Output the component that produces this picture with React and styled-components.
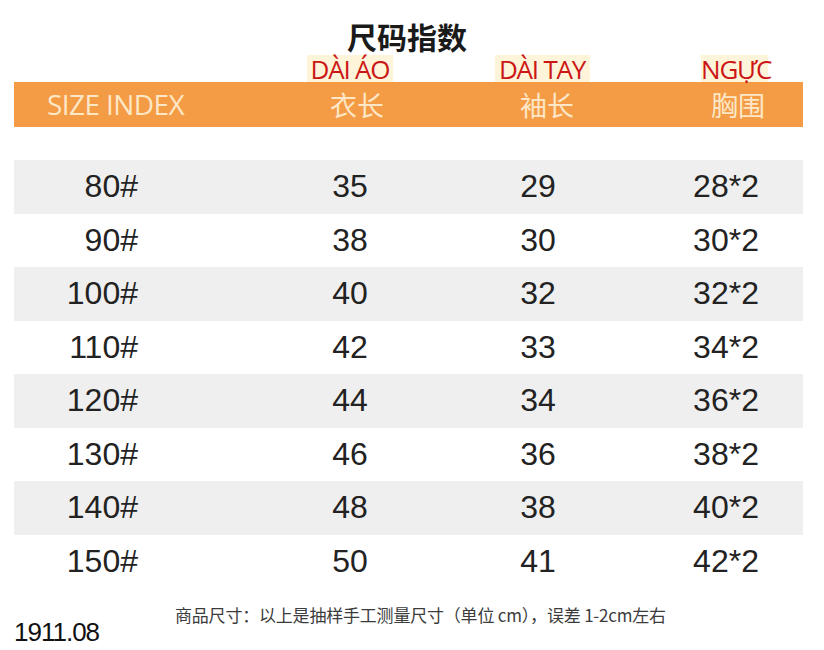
import React from "react";
import styled, { createGlobalStyle } from "styled-components";

const GlobalStyle = createGlobalStyle`
  body {
    margin: 0;
    background: #ffffff;
    font-family: "Liberation Sans", Arial, sans-serif;
  }
`;

const COLS = "242px 188px 188px 171px";

const Page = styled.div`
  width: 824px;
  height: 650px;
  background: #ffffff;
  overflow: hidden;
`;

const Title = styled.h1`
  margin: 21px 0 0;
  height: 30px;
  text-align: center;
  font-family: "Noto Sans CJK SC", sans-serif;
  font-size: 30px;
  line-height: 30px;
  font-weight: 700;
  color: #1a1a1a;
  padding-right: 10px;
`;

const LabelRow = styled.div`
  display: grid;
  grid-template-columns: ${COLS};
  width: 789px;
  margin: 4px 14px 0;
  height: 27px;
`;

const LabelCell = styled.div`
  display: flex;
  justify-content: center;
  padding-left: ${(p) => p.shift || 0}px;
`;

const Label = styled.span`
  display: inline-block;
  width: ${(p) => p.w}px;
  height: 27px;
  background: #fdf4d9;
  color: #cc1616;
  font-family: "Open Sans", sans-serif;
  font-size: 26px;
  line-height: 28px;
  letter-spacing: -1.2px;
  text-align: center;
  white-space: nowrap;
`;

const HeaderBar = styled.div`
  display: grid;
  grid-template-columns: ${COLS};
  width: 789px;
  margin: 0 14px;
  height: 45px;
  background: #f49b45;
  align-items: center;
  color: #fde7c6;
`;

const HeaderEn = styled.div`
  padding-left: 33px;
  font-family: "Open Sans", sans-serif;
  font-size: 28px;
  letter-spacing: -0.6px;
  line-height: 45px;
`;

const HeaderCn = styled.div`
  text-align: center;
  padding-left: ${(p) => p.shift || 0}px;
  font-family: "Noto Sans CJK SC", sans-serif;
  font-size: 27px;
  font-weight: 400;
  line-height: 45px;
`;

const Table = styled.div`
  width: 789px;
  margin: 33px 14px 0;
`;

const Row = styled.div`
  display: grid;
  grid-template-columns: ${COLS};
  height: 53.5px;
  align-items: center;
  background: ${(p) => (p.shaded ? "#efefef" : "#ffffff")};
  color: #222222;
  font-size: 32px;
`;

const SizeCell = styled.div`
  text-align: right;
  padding-right: 118px;
`;

const Cell = styled.div`
  text-align: center;
  padding-left: ${(p) => p.shift || 0}px;
`;

const Footer = styled.div`
  display: grid;
  grid-template-columns: 175px 1fr;
  margin-top: 14px;
`;

const Code = styled.div`
  padding-left: 14px;
  margin-top: 15px;
  font-size: 26px;
  letter-spacing: -1px;
  color: #111111;
`;

const Note = styled.div`
  font-family: "Noto Sans CJK SC", sans-serif;
  font-size: 17px;
  color: #3c3c3c;
  letter-spacing: -0.2px;
  white-space: nowrap;
`;

const rows = [
  ["80#", "35", "29", "28*2"],
  ["90#", "38", "30", "30*2"],
  ["100#", "40", "32", "32*2"],
  ["110#", "42", "33", "34*2"],
  ["120#", "44", "34", "36*2"],
  ["130#", "46", "36", "38*2"],
  ["140#", "48", "38", "40*2"],
  ["150#", "50", "41", "42*2"],
];

export default function App() {
  return (
    <Page>
      <GlobalStyle />
      <Title>尺码指数</Title>
      <LabelRow>
        <div />
        <LabelCell shift={-4}>
          <Label w={86}>DÀI ÁO</Label>
        </LabelCell>
        <LabelCell shift={8}>
          <Label w={95}>DÀI TAY</Label>
        </LabelCell>
        <LabelCell shift={34}>
          <Label w={67}>NGỰC</Label>
        </LabelCell>
      </LabelRow>
      <HeaderBar>
        <HeaderEn>SIZE INDEX</HeaderEn>
        <HeaderCn shift={14}>衣长</HeaderCn>
        <HeaderCn shift={18}>袖长</HeaderCn>
        <HeaderCn shift={41}>胸围</HeaderCn>
      </HeaderBar>
      <Table>
        {rows.map((r, i) => (
          <Row key={r[0]} shaded={i % 2 === 0}>
            <SizeCell>{r[0]}</SizeCell>
            <Cell>{r[1]}</Cell>
            <Cell>{r[2]}</Cell>
            <Cell shift={17}>{r[3]}</Cell>
          </Row>
        ))}
      </Table>
      <Footer>
        <Code>1911.08</Code>
        <Note>商品尺寸：以上是抽样手工测量尺寸（单位 cm），误差 1-2cm左右</Note>
      </Footer>
    </Page>
  );
}
